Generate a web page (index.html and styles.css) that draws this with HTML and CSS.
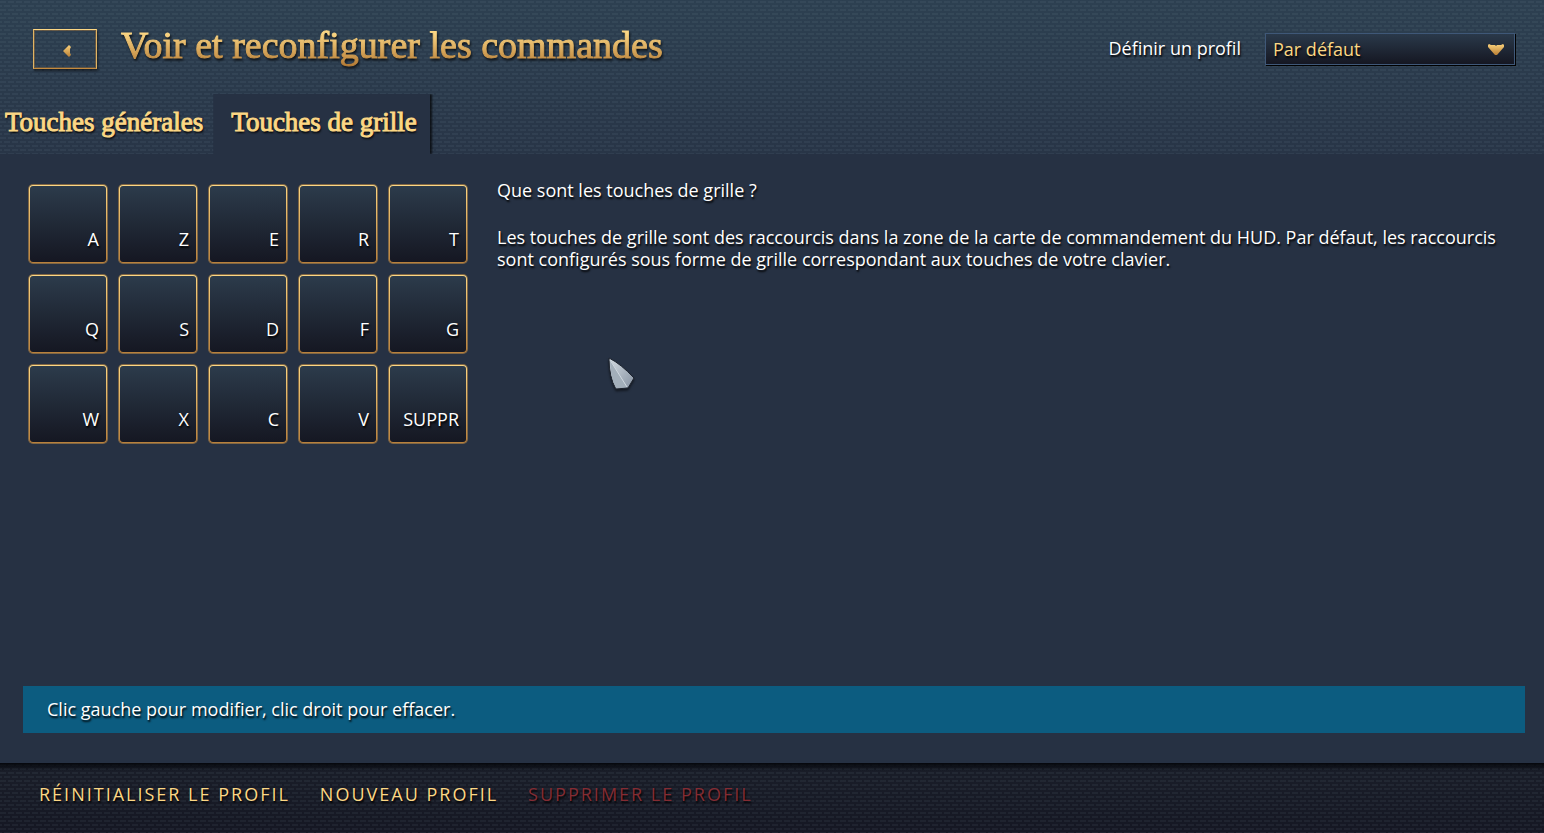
FILE: index.html
```html
<!DOCTYPE html>
<html lang="fr">
<head>
  <meta charset="UTF-8">
  <meta name="viewport" content="width=device-width, initial-scale=1.0">
  <title>Voir et reconfigurer les commandes</title>
  <link rel="stylesheet" href="styles.css">
</head>
<body>
  <header class="header">
    <div class="title-bar">
      <button class="back" type="button" aria-label="Retour">
        <svg width="8" height="12" viewBox="0 0 8 12">
          <defs>
            <linearGradient id="gold" x1="0" y1="0" x2="0" y2="1">
              <stop offset="0" stop-color="#fbd27c"/>
              <stop offset="1" stop-color="#b97f35"/>
            </linearGradient>
          </defs>
          <path d="M0 6 L6 0 L8 2 L7 4 V8 L8 10 L6 12 Z" fill="url(#gold)"/>
        </svg>
      </button>
      <h1>Voir et reconfigurer les commandes</h1>
      <label class="profile-label" for="profile">Définir un profil</label>
      <div class="profile">
        <select id="profile">
          <option>Par défaut</option>
        </select>
        <svg class="arrow" width="16" height="12" viewBox="0 0 16 12">
          <path d="M0 1 L1 0 L3 1 H7 L8 2 L9 1 H13 L15 0 L16 1 V3 L9 11 H7 L0 3 Z" fill="url(#gold)"/>
        </svg>
      </div>
    </div>
    <nav class="tabs">
      <button class="tab" type="button">Touches générales</button>
      <button class="tab active" type="button">Touches de grille</button>
    </nav>
  </header>

  <main class="content">
    <div class="columns">
      <div class="keys">
        <button type="button">A</button>
        <button type="button">Z</button>
        <button type="button">E</button>
        <button type="button">R</button>
        <button type="button">T</button>
        <button type="button">Q</button>
        <button type="button">S</button>
        <button type="button">D</button>
        <button type="button">F</button>
        <button type="button">G</button>
        <button type="button">W</button>
        <button type="button">X</button>
        <button type="button">C</button>
        <button type="button">V</button>
        <button type="button">SUPPR</button>
      </div>
      <div class="help">
        <p>Que sont les touches de grille ?</p>
        <p>Les touches de grille sont des raccourcis dans la zone de la carte de commandement du HUD. Par défaut, les raccourcis sont configurés sous forme de grille correspondant aux touches de votre clavier.</p>
      </div>
    </div>
    <p class="notice">Clic gauche pour modifier, clic droit pour effacer.</p>
  </main>

  <footer class="footer">
    <button type="button">Réinitialiser le profil</button>
    <button type="button">Nouveau profil</button>
    <button type="button" disabled>Supprimer le profil</button>
  </footer>

  <svg class="cursor" width="28" height="34" viewBox="0 0 28 34">
    <defs>
      <linearGradient id="blade" x1="0" y1="0" x2="1" y2="1">
        <stop offset="0" stop-color="#d5dde3"/>
        <stop offset="1" stop-color="#8490a0"/>
      </linearGradient>
    </defs>
    <path d="M1 1 Q13 7 26 21 L20 31 L8 32 Q1 20 1 1 Z" fill="url(#blade)" stroke="#1d232d"/>
    <path d="M2 2 L19 30 L8 31 Q2 20 2 2 Z" fill="#a3afba"/>
    <path d="M2 3 L19 30" stroke="#d0d9e0" fill="none"/>
  </svg>
</body>
</html>
```
FILE: styles.css
```css
* {
  margin: 0;
  padding: 0;
  box-sizing: border-box;
}

:root {
  --gold: #fcd784;
  --gold-dark: #b57b35;
  --panel: #263143;
  /* woven cloth behind the top and bottom bars */
  --cloth: url("data:image/svg+xml,%3Csvg xmlns='http://www.w3.org/2000/svg' width='8' height='8'%3E%3Cg fill='%23a0b4c8' fill-opacity='.07'%3E%3Crect y='1' width='6' height='2'/%3E%3Crect x='4' y='5' width='4' height='2'/%3E%3Crect y='5' width='2' height='2'/%3E%3C/g%3E%3C/svg%3E");
}

body {
  display: flex;
  flex-direction: column;
  min-height: 100vh;
  background: var(--panel);
  color: #fff;
  font: 18px/22px "Open Sans", sans-serif;
  text-shadow: 1px 2px 2px #000;
}

button,
select {
  border: 0;
  background: none;
  color: inherit;
  font: inherit;
  text-shadow: inherit;
}

.header {
  background: var(--cloth), linear-gradient(#2d4051, #283547);
}

.title-bar {
  display: flex;
  align-items: center;
  height: 94px;
  padding: 0 29px 0 33px;
}

.back {
  width: 64px;
  height: 40px;
  margin-top: 4px;
  border: 1px solid #e0b464;
  border-top-color: #fcd784;
  border-bottom-color: #c48a3e;
  box-shadow:
    inset 0 0 0 1px rgba(181, 123, 53, .4),
    1px 2px 2px rgba(0, 0, 0, .5);
}

.back svg {
  margin-left: 3px;
  vertical-align: middle;
}

h1 {
  margin-left: 24px;
  padding-bottom: 4px;
  background: linear-gradient(var(--gold) 20%, var(--gold-dark) 90%);
  background-clip: text;
  color: transparent;
  font: 38px/44px "Liberation Serif", serif;
  text-shadow: none;
  -webkit-text-stroke: 1px transparent;
  filter: drop-shadow(1px 2px 1px rgba(0, 0, 0, .7));
}

.profile-label {
  margin: 2px 0 0 auto;
}

.profile {
  position: relative;
  width: 250px;
  margin: 4px 0 0 24px;
}

.profile select {
  display: block;
  width: 100%;
  height: 32px;
  padding: 0 7px;
  appearance: none;
  border: 1px solid #3f5878;
  background: linear-gradient(#2a394a, #151722);
  box-shadow: 1px 1px 0 #000;
  color: var(--gold);
}

.profile .arrow {
  position: absolute;
  top: 11px;
  right: 11px;
  pointer-events: none;
}

.tabs {
  display: flex;
  height: 60px;
}

.tab {
  padding: 0 10px 4px 5px;
  color: var(--gold);
  font: 27px/30px "Liberation Serif", serif;
  -webkit-text-stroke: 1px var(--gold);
}

.tab.active {
  padding: 0 13px 4px 18px;
  background: var(--panel);
  box-shadow: 2px 0 2px rgba(0, 0, 0, .7);
  clip-path: inset(0 -4px 0 0);
}

.content {
  display: flex;
  flex: 1;
  flex-direction: column;
  justify-content: space-between;
  padding: 30px 19px 30px 23px;
}

.columns {
  display: flex;
  gap: 29px;
  padding: 0 20px 0 6px;
}

.keys {
  display: grid;
  grid-template-columns: repeat(5, 78px);
  grid-auto-rows: 78px;
  flex: none;
  gap: 12px;
  padding: 1px 1px 0 0;
}

.keys button {
  display: flex;
  align-items: flex-end;
  justify-content: flex-end;
  padding: 0 7px 12px 0;
  border: 1px solid transparent;
  border-radius: 4px;
  background:
    linear-gradient(#2c3b4b, #151722) padding-box,
    linear-gradient(var(--gold), #b8803c) border-box;
  box-shadow: 0 0 0 1px rgba(190, 140, 70, .6);
}

.help p {
  margin: -5px 0 30px;
}

.notice {
  padding: 12px 24px 13px;
  background: #0c5c80;
}

.footer {
  display: flex;
  align-items: center;
  gap: 30px;
  height: 70px;
  padding: 0 39px 8px;
  background:
    linear-gradient(#05070c, transparent 8px),
    var(--cloth),
    linear-gradient(#1a1e29, #151723);
}

.footer button {
  color: var(--gold);
  letter-spacing: 2px;
  text-transform: uppercase;
}

.footer button:disabled {
  color: #842c33;
}

.cursor {
  position: absolute;
  top: 357px;
  left: 608px;
  pointer-events: none;
  filter: drop-shadow(0 2px 1px rgba(0, 0, 0, .5));
}
```
